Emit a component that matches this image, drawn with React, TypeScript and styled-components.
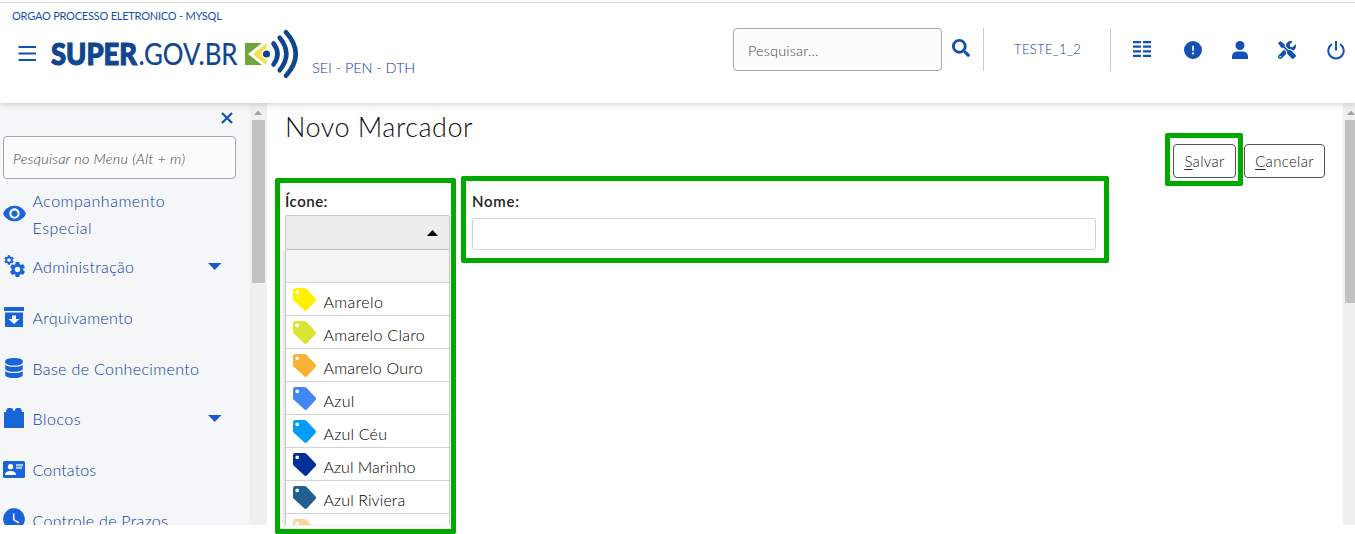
import React from "react";
import styled, { createGlobalStyle } from "styled-components";
import { FaSearch, FaDatabase, FaTools } from "react-icons/fa";
import { FaCircleExclamation } from "react-icons/fa6";
import { MdVisibility, MdSettings, MdWatchLater } from "react-icons/md";

const Global = createGlobalStyle`
  * { box-sizing: border-box; }
  body { margin: 0; background: #fff; font-family: Lato, "Open Sans", sans-serif; overflow: hidden; }
`;

const Page = styled.div`
  width: 1355px;
  height: 534px;
  display: flex;
  flex-direction: column;
  overflow: hidden;
`;

const Header = styled.header`
  position: relative;
  z-index: 1;
  height: 103px;
  flex: none;
  display: flex;
  justify-content: space-between;
  padding-top: 2px;
  background: #fff;
  color: #1351b4;
  box-shadow: 0 1px 7px rgba(0, 0, 0, 0.2);
  &::before {
    content: "";
    position: absolute;
    left: 0;
    right: 0;
    top: 2px;
    height: 1px;
    background: #dcdcdc;
  }
`;

const Brand = styled.div`
  padding: 7px 0 0 12px;
`;

const Text = styled.span<{ $ls?: number; $size?: number; $color?: string; $weight?: number }>`
  font-size: ${(p) => p.$size ?? 16}px;
  letter-spacing: ${(p) => p.$ls ?? 0}px;
  font-weight: ${(p) => p.$weight ?? 300};
  white-space: nowrap;
  ${(p) => p.$color && `color: ${p.$color};`}
`;

const Unit = styled.div`
  height: 14px;
  line-height: 14px;
  display: flex;
`;

const BrandRow = styled.div`
  display: flex;
  align-items: flex-start;
  padding: 5px 0 0 6px;
`;

const System = styled.div`
  padding: 30px 0 0 12px;
  line-height: 20px;
  display: flex;
`;

const Tools = styled.div`
  display: flex;
  align-items: flex-start;
  padding-top: 26px;
  width: 622px;
`;

const SearchBox = styled.div`
  width: 209px;
  height: 43px;
  border: 1px solid #a2a7ab;
  border-radius: 4px;
  background: #fcfcfc;
  display: flex;
  align-items: center;
  padding: 1px 0 0 14px;
`;

const SearchIcon = styled.div`
  width: 41px;
  height: 43px;
  padding: 11px 0 0 10px;
`;

const UserCell = styled.div`
  width: 128px;
  height: 43px;
  border-left: 1px solid #ccc;
  border-right: 1px solid #ccc;
  display: flex;
  padding: 12px 0 0 30px;
  line-height: 18px;
`;

const Actions = styled.div`
  display: grid;
  grid-template-columns: 51px 48px 46px 49px 20px;
  padding: 13px 0 0 22px;
  & svg { display: block; }
`;

const Body = styled.div`
  display: flex;
  height: 422px;
  overflow: visible;
`;

const Sidebar = styled.aside`
  width: 250px;
  height: 422px;
  flex: none;
  overflow: hidden;
  background: #f4f6f8;
  color: #0d3ba8;
`;

const CloseRow = styled.div`
  height: 33px;
  display: flex;
  justify-content: flex-end;
  padding: 9px 17px 0 0;
`;

const MenuSearch = styled.div`
  width: 233px;
  height: 43px;
  margin-left: 3px;
  border: 1px solid #a2a7ab;
  border-radius: 4px;
  background: #fcfcfc;
  display: flex;
  align-items: center;
  padding: 1px 0 0 9px;
  font-style: italic;
`;

const Menu = styled.nav`
  padding-top: 9px;
`;

const MenuItem = styled.div<{ $tall?: boolean }>`
  height: ${(p) => (p.$tall ? 54.2 : 50.75)}px;
  display: grid;
  grid-template-columns: 32.5px 175.5px 14px;
  align-items: center;
  line-height: 27px;
  & > svg { display: block; margin-top: -2px; }
`;

const IconCell = styled.div<{ $x: number; $dy?: number }>`
  padding-left: ${(p) => p.$x}px;
  margin-top: ${(p) => p.$dy ?? 0}px;
  color: #1864d8;
  & svg { display: block; }
`;

const Lines = styled.div`
  display: flex;
  flex-direction: column;
  align-items: flex-start;
  margin-top: -2px;
`;

const Scrollbar = styled.div<{ $w: number; $pad: number; $thumb: number }>`
  width: ${(p) => p.$w}px;
  flex: none;
  background: #f0f0f0;
  padding: 7px 0 0 ${(p) => p.$pad}px;
  overflow: hidden;
  & > svg { display: block; margin: 0 0 5px 2px; }
  & > div { width: 13px; height: ${(p) => p.$thumb}px; background: #c1c1c1; }
`;

const Main = styled.main`
  flex: 1;
  padding: 9px 18px 0 18px;
  min-width: 0;
`;

const TitleRow = styled.div`
  height: 80px;
  display: flex;
  justify-content: space-between;
`;

const Title = styled.h1`
  margin: 0;
  font-size: 27px;
  line-height: 29px;
  font-weight: 300;
  letter-spacing: 0.5px;
  color: #111;
  white-space: nowrap;
`;

const Buttons = styled.div`
  display: flex;
  align-items: flex-start;
  gap: 8px;
  padding-top: 32px;
`;

const Marked = styled.div`
  position: relative;
`;

const Outline = styled.div<{ $inset: string }>`
  position: absolute;
  inset: ${(p) => p.$inset};
  border: 5px solid #00a900;
  border-radius: 2px;
  pointer-events: none;
`;

const Button = styled.button<{ $w: number; $ls: number }>`
  width: ${(p) => p.$w}px;
  height: 34px;
  display: block;
  padding: 0;
  border: 1px solid #555;
  border-radius: 4px;
  background: #fff;
  color: #222;
  font: 300 15px Lato, sans-serif;
  letter-spacing: ${(p) => p.$ls}px;
  & u { text-underline-offset: 2px; }
`;

const Form = styled.div`
  display: flex;
  align-items: flex-start;
  gap: 22px;
`;

const Field = styled(Marked)<{ $w: number }>`
  width: ${(p) => p.$w}px;
`;

const Label = styled.div<{ $h: number; $ls: number }>`
  height: ${(p) => p.$h}px;
  line-height: 19px;
  font-size: 15px;
  font-weight: 600;
  letter-spacing: ${(p) => p.$ls}px;
  color: #222;
`;

const Select = styled.div`
  height: 35px;
  background: #ededed;
  border: 1px solid #c8c8c8;
  border-radius: 2px;
  display: flex;
  justify-content: flex-end;
  padding: 14px 11px 0 0;
`;

const Options = styled.div`
  height: 275px;
  overflow: hidden;
  border-left: 1px solid #c8c8c8;
  border-right: 1px solid #c8c8c8;
  box-shadow: -2px 0 3px rgba(0, 0, 0, 0.12);
`;

const Option = styled.div<{ $empty?: boolean }>`
  height: 33px;
  border-bottom: 1px solid #d3d3d3;
  background: ${(p) => (p.$empty ? "#f5f5f5" : "#fff")};
  display: flex;
  padding: 5px 0 0 7px;
  & > span { margin-left: 6.5px; line-height: 28px; }
`;

const Input = styled.div`
  height: 32px;
  border: 1px solid #ced4da;
  border-radius: 3px;
`;

const TagShape = styled.svg`
  flex: none;
`;

const Tag = ({ color }: { color: string }) => (
  <TagShape width="24" height="24" viewBox="0 0 24 24">
    <path
      fill={color}
      fillRule="evenodd"
      d="M2.4 0H11.4Q12.6 0 13.4.8L22.6 10.6Q23.7 11.8 22.6 13L14 22.2Q12.6 23.6 11.2 22.2L.8 12.8Q0 12 0 11V2.4Q0 0 2.4 0ZM4.2 2.4a1.9 1.9 0 1 0 0 3.8a1.9 1.9 0 1 0 0-3.8Z"
    />
  </TagShape>
);

const Logo = () => (
  <svg width="252" height="52" viewBox="48 28 252 52">
    <g fill="#11468f" stroke="#11468f" fontFamily="Lato, sans-serif">
      <text x="51" y="64.500" fontSize="29.500" fontWeight="900" strokeWidth="1.100" textLength="86" lengthAdjust="spacingAndGlyphs">SUPER</text>
      <text x="138.500" y="65" fontSize="30" fontWeight="400" strokeWidth="0.200" textLength="99" lengthAdjust="spacingAndGlyphs">.GOV.BR</text>
    </g>
    <path fill="#6fa53f" d="M245 43H262L248 54L262 65H245Z" />
    <path fill="#f3e04b" d="M266.500 43.500V65L252.500 54Z" />
    <circle cx="266.500" cy="54" r="5" fill="#fff" />
    <circle cx="266.500" cy="54" r="3.600" fill="#11468f" />
    <g fill="none" stroke="#11468f" strokeWidth="4.600" strokeLinecap="round">
      <path d="M273.500 43.500Q281.500 54 273.500 64.500" />
      <path d="M279.700 37.800Q293 54 279.700 70.200" />
      <path d="M286 32.300Q305.500 54 286 75.700" />
    </g>
  </svg>
);

const Gears = () => (
  <svg width="26" height="26" viewBox="0 0 26 26">
    <MdSettings x="1" y="0" size={12} />
    <MdSettings x="6" y="6" size={19} />
  </svg>
);

const Archive = () => (
  <svg width="20" height="20" viewBox="0 0 20 20">
    <path fill="currentColor" d="M0 0H20V4H0ZM1 5.500H19V20H1Z" />
    <path fill="#fff" d="M8 8.500H12V12H15.500L10 17L4.500 12H8Z" />
  </svg>
);

const Blocks = () => (
  <svg width="20" height="20" viewBox="0 0 20 20">
    <path fill="currentColor" d="M0 4H2Q2.500 0 4.500 0H7Q9 0 9.500 3H10.500Q11 0 13 0H15.500Q17.500 0 18 4H20V20H0Z" />
  </svg>
);

const Card = () => (
  <svg width="22" height="17" viewBox="0 0 22 17">
    <rect width="22" height="17" rx="1.500" fill="currentColor" />
    <circle cx="7.500" cy="5.700" r="2.700" fill="#fff" />
    <path fill="#fff" d="M2 14Q2 10 7.500 10T13 14Z" />
    <path fill="#a9c6f3" d="M13 3H20V5.500H13ZM13 6H19V8H13Z" />
  </svg>
);

const Menus = () => (
  <svg width="18" height="16" viewBox="0 0 18 16">
    {[0, 4.600, 9.200, 13.800].map((y) => (
      <path key={y} fill="#1351b4" d={`M0 ${y}h8v2.200h-8zM10 ${y}h8v2.200h-8z`} />
    ))}
  </svg>
);

const Person = () => (
  <svg width="16" height="18" viewBox="0 0 16 18">
    <circle cx="8" cy="4.500" r="4.500" fill="#1351b4" />
    <path fill="#1351b4" d="M0 18V16Q0 10.500 5.500 10.500H10.500Q16 10.500 16 16V18Z" />
  </svg>
);

const Power = () => (
  <svg width="18" height="19" viewBox="0 0 18 19" fill="none" stroke="#1351b4" strokeWidth="2">
    <path d="M9 0V9.500M5 3.200A7.700 7.700 0 1 0 13 3.200" />
  </svg>
);

const Caret = () => (
  <svg width="14" height="7" viewBox="0 0 14 7"><path d="M0 0H13.500L6.800 7Z" fill="#1a5cd0" /></svg>
);
const Up = () => (
  <svg width="8" height="5" viewBox="0 0 8 5"><path d="M0 5L4 .5L8 5Z" fill="#a0a0a0" /></svg>
);

const items: { lines: [string, number][]; icon: React.ReactNode; x: number; dy?: number; caret?: boolean }[] = [
  { lines: [["Acompanhamento", 0.5], ["Especial", 0.5]], icon: <MdVisibility size={25} />, x: 1.5, dy: -3 },
  { lines: [["Administração", 0.32]], icon: <Gears />, x: 1.5, dy: -2, caret: true },
  { lines: [["Arquivamento", 0.32]], icon: <Archive />, x: 4, dy: -3 },
  { lines: [["Base de Conhecimento", 0.36]], icon: <FaDatabase size={20} />, x: 4, dy: -3 },
  { lines: [["Blocos", 0.5]], icon: <Blocks />, x: 4, dy: -4, caret: true },
  { lines: [["Contatos", 0.15]], icon: <Card />, x: 3, dy: -3 },
  { lines: [["Controle de Prazos", 0.27]], icon: <MdWatchLater size={26} />, x: 1, dy: -4 },
];

const tags: [string, string, number][] = [
  ["Amarelo", "#fff200", 0.4],
  ["Amarelo Claro", "#dde236", 0.3],
  ["Amarelo Ouro", "#f9b233", 0.2],
  ["Azul", "#4285f4", 0.3],
  ["Azul Céu", "#039df5", 0.2],
  ["Azul Marinho", "#002e9b", 0],
  ["Azul Riviera", "#235f8f", 0.1],
];

export default function App() {
  return (
    <Page>
      <Global />
      <Header>
        <Brand>
          <Unit><Text $size={11} $weight={400} $ls={-0.22}>ORGAO PROCESSO ELETRONICO - MYSQL</Text></Unit>
          <BrandRow>
            <svg width="30" height="52" viewBox="18 28 30 52">
              <path stroke="#1351b4" strokeWidth="2.200" d="M18.500 47H36M18.500 53.500H36M18.500 60H36" />
            </svg>
            <Logo />
            <System><Text $size={14.5} $ls={-0.05} $color="#0d3ba8">SEI - PEN - DTH</Text></System>
          </BrandRow>
        </Brand>
        <Tools>
          <SearchBox><Text $size={14.5} $ls={0.15} $color="#444">Pesquisar...</Text></SearchBox>
          <SearchIcon><FaSearch size={18} /></SearchIcon>
          <UserCell><Text $size={13} $ls={0.35} $color="#0d3ba8">TESTE_1_2</Text></UserCell>
          <Actions>
            <Menus />
            <FaCircleExclamation size={18} />
            <Person />
            <FaTools size={18} />
            <Power />
          </Actions>
        </Tools>
      </Header>
      <Body>
        <Sidebar>
          <CloseRow>
            <svg width="12" height="12" viewBox="0 0 12 12"><path d="M1 1L11 11M11 1L1 11" stroke="#1351b4" strokeWidth="2.200" /></svg>
          </CloseRow>
          <MenuSearch><Text $size={14.5} $ls={0.25} $color="#444">Pesquisar no Menu (Alt + m)</Text></MenuSearch>
          <Menu>
            {items.map((it, i) => (
              <MenuItem key={i} $tall={i === 0}>
                <IconCell $x={it.x} $dy={it.dy}>{it.icon}</IconCell>
                <Lines>{it.lines.map(([t, ls]) => <Text key={t} $ls={ls}>{t}</Text>)}</Lines>
                {it.caret && <Caret />}
              </MenuItem>
            ))}
          </Menu>
        </Sidebar>
        <Scrollbar $w={17} $pad={2} $thumb={163}><Up /><div /></Scrollbar>
        <Main>
          <TitleRow>
            <Title>Novo Marcador</Title>
            <Buttons>
              <Marked>
                <Button $w={63} $ls={0.3}><u>S</u>alvar</Button>
                <Outline $inset="-11px -7px -8px -8px" />
              </Marked>
              <Button $w={81} $ls={0.3}><u>C</u>ancelar</Button>
            </Buttons>
          </TitleRow>
          <Form>
            <Field $w={165}>
              <Label $h={23} $ls={0.5}>Ícone:</Label>
              <Select><svg width="11" height="6" viewBox="0 0 11 6"><path d="M0 6L5.500 0L11 6Z" /></svg></Select>
              <Options>
                <Option $empty />
                {tags.map(([name, color, ls]) => (
                  <Option key={name}><Tag color={color} /><Text $ls={ls} $color="#000">{name}</Text></Option>
                ))}
                <Option><Tag color="#fad396" /></Option>
              </Options>
              <Outline $inset="-14px -6px -9px -10px" />
            </Field>
            <Field $w={624}>
              <Label $h={26} $ls={0.75}>Nome:</Label>
              <Input />
              <Outline $inset="-16px -13px -13px -11px" />
            </Field>
          </Form>
        </Main>
        <Scrollbar $w={12} $pad={2} $thumb={183}><Up /><div /></Scrollbar>
      </Body>
    </Page>
  );
}
